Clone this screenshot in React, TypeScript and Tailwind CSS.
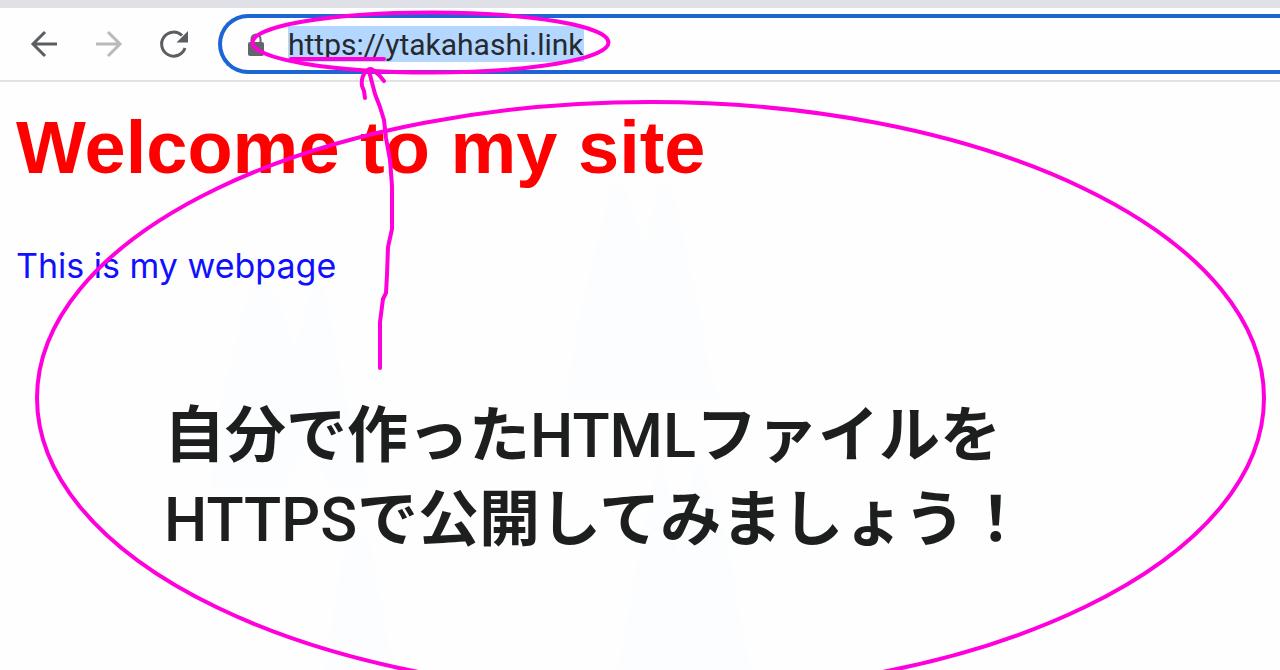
import { useState } from "react";

// faint peaks behind the page text
const peaks = [
  "M250 285 L272 285 L295 350 L312 285 L324 285 L347 405 L370 490 L330 490 L309 440 L284 490 L210 490 L220 405 Z",
  "M612 185 L626 185 L643 248 L660 185 L672 185 L697 300 L712 380 L722 400 L565 400 L583 300 Z",
  "M346 535 L368 535 L394 670 L324 670 Z",
  "M657 465 L664 465 L679 560 L694 465 L702 465 L727 540 L750 670 L618 670 L638 560 Z",
];

function Backdrop() {
  return (
    <svg
      className="absolute top-0 left-0 -z-10"
      width="1280"
      height="670"
      viewBox="0 0 1280 670"
      fill="#fbfdff"
      aria-hidden="true"
    >
      {peaks.map((d) => (
        <path key={d} d={d} />
      ))}
    </svg>
  );
}

function Annotations() {
  return (
    <svg
      className="pointer-events-none absolute top-0 left-0"
      width="1280"
      height="670"
      viewBox="0 0 1280 670"
      fill="none"
      stroke="#ff00dc"
      strokeWidth="4"
      strokeLinecap="round"
      strokeLinejoin="round"
      aria-hidden="true"
    >
      <ellipse cx="430.5" cy="42.5" rx="178" ry="30" />
      <path d="M291 59 H384" />
      <ellipse cx="650.5" cy="398" rx="613.5" ry="296" />
      <path d="M380 368 V322 L383 299 L386 293 L387 275 L388 247 L392 229 V186 L390 160 L386 138 L384 120 L380 107 L375 94 L369 71" />
      <path d="M365 98 L364 91 L362 86 Q361 79 364 74 Q368 67 373 70 L379 75 L384 81" />
    </svg>
  );
}

function Toolbar() {
  const [url, setUrl] = useState("https://ytakahashi.link");

  return (
    <header className="border-b-2 border-[#e2e2e2]">
      <div className="h-2 bg-[#dfe1e6]" />
      <div className="flex items-center py-1.5 pl-7">
        <nav className="mr-[30px] flex shrink-0 items-center gap-8">
          <button type="button" aria-label="Back" className="text-[#5a5d61]">
            <svg width="32" height="32" viewBox="0 0 32 32" fill="none" stroke="currentColor" strokeWidth="3">
              <path d="M29 16 H5 M17 4 L5 16 L17 28" />
            </svg>
          </button>
          <button type="button" aria-label="Forward" className="text-[#b9babc]">
            <svg width="32" height="32" viewBox="0 0 32 32" fill="none" stroke="currentColor" strokeWidth="3">
              <path d="M4 16 H28 M16 4 L28 16 L16 28" />
            </svg>
          </button>
          <button type="button" aria-label="Reload" className="text-[#5a5d61]">
            <svg width="32" height="32" viewBox="-3 0 32 32" fill="none">
              <path d="M26 20 A12 12 0 1 1 23 7.500" stroke="currentColor" strokeWidth="3" />
              <path d="M29 3 V14.500 H17.500 Z" fill="currentColor" />
            </svg>
          </button>
        </nav>
        <div className="flex h-[60px] flex-1 items-center rounded-l-full border-4 border-r-0 border-[#1b66d4] pl-6">
          <svg width="20" height="26" viewBox="0 0 20 26" className="mr-[22px] shrink-0" aria-hidden="true">
            <path d="M5.500 12 V8 A4.500 4.500 0 0 1 14.500 8 V12" fill="none" stroke="#626569" strokeWidth="2" />
            <rect x="2" y="11" width="16" height="14" rx="2" fill="#626569" />
          </svg>
          <input
            type="text"
            aria-label="Address"
            spellCheck={false}
            value={url}
            onChange={(e) => setUrl(e.target.value)}
            className="field-sizing-content h-9 bg-[#b3d7ff] font-[Roboto,sans-serif] text-[30px] text-[#26292d] outline-none"
          />
        </div>
      </div>
    </header>
  );
}

export default function App() {
  return (
    <div className="relative isolate min-h-screen overflow-hidden bg-[#fefefe] font-[Inter,sans-serif]">
      <Backdrop />
      <Toolbar />
      <main className="px-4 pt-5">
        <h1 className="font-['Liberation_Sans',sans-serif] text-[74px] leading-[92px] font-bold text-[#ff0000]">
          Welcome to my site
        </h1>
        <p className="mt-[50px] text-[34px] leading-[44px] text-[#1010ff]">This is my webpage</p>
        <p className="mt-[106px] pl-[148px] font-[Roboto,'Noto_Sans_CJK_JP',sans-serif] text-[61px] leading-[84px] font-bold text-[#1d1f1f]">
          自分で作った<span className="font-medium">HTML</span>ファイルを
          <br />
          <span className="font-medium">HTTPS</span>で公開してみましょう！
        </p>
      </main>
      <Annotations />
    </div>
  );
}
